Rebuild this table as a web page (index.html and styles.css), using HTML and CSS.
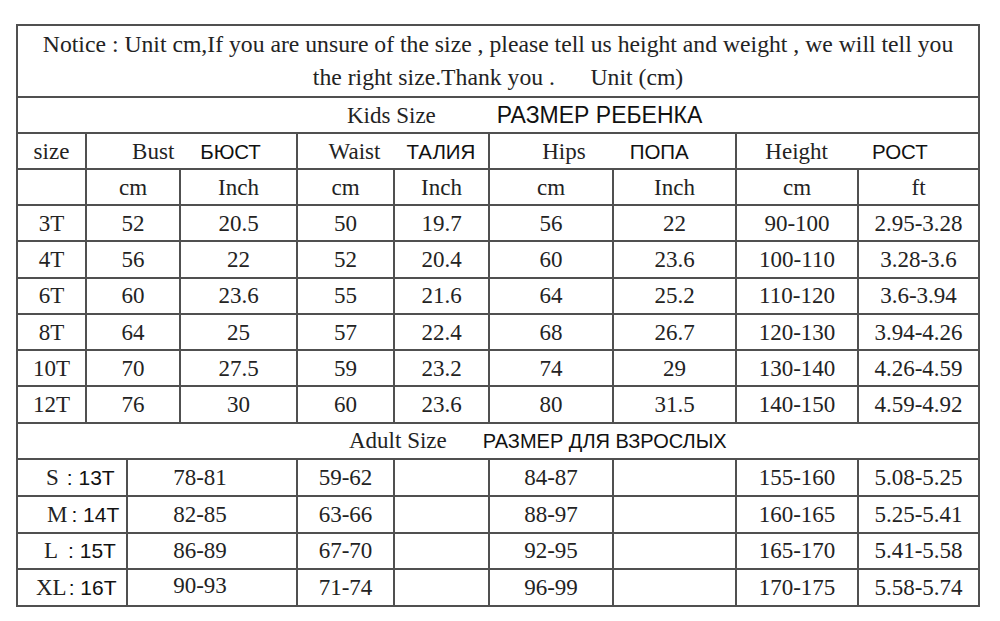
FILE: index.html
```html
<!DOCTYPE html>
<html>
<head>
<meta charset="utf-8">
<link rel="stylesheet" href="styles.css">
</head>
<body>
<table class="chart">
  <colgroup>
    <col class="c1"><col class="c2"><col class="c3"><col class="c4"><col class="c5">
    <col class="c6"><col class="c7"><col class="c8"><col class="c9"><col class="c10">
  </colgroup>
  <tr class="r-notice">
    <td colspan="10" class="notice">Notice : Unit cm,If you are unsure of the size , please tell us height and weight , we will tell you<br>the right size.Thank you .&nbsp;&nbsp;&nbsp;&nbsp;&nbsp; Unit (cm)</td>
  </tr>
  <tr class="r-title">
    <td colspan="10" class="title"><span class="en">Kids Size</span><span class="ru">РАЗМЕР РЕБЕНКА</span></td>
  </tr>
  <tr class="r-head">
    <td>size</td>
    <td colspan="3" class="h-bust"><span class="en">Bust</span><span class="ru hd">БЮСТ</span></td>
    <td colspan="2" class="h-waist"><span class="en">Waist</span><span class="ru hd">ТАЛИЯ</span></td>
    <td colspan="2" class="h-hips"><span class="en">Hips</span><span class="ru hd wide">ПОПА</span></td>
    <td colspan="2" class="h-height"><span class="en">Height</span><span class="ru hd wide">РОСТ</span></td>
  </tr>
  <tr class="r-head">
    <td></td>
    <td colspan="2">cm</td><td>Inch</td>
    <td>cm</td><td>Inch</td>
    <td>cm</td><td>Inch</td>
    <td>cm</td><td>ft</td>
  </tr>
  <tr class="r-row"><td>3T</td><td colspan="2">52</td><td>20.5</td><td>50</td><td>19.7</td><td>56</td><td>22</td><td>90-100</td><td>2.95-3.28</td></tr>
  <tr class="r-row"><td>4T</td><td colspan="2">56</td><td>22</td><td>52</td><td>20.4</td><td>60</td><td>23.6</td><td>100-110</td><td>3.28-3.6</td></tr>
  <tr class="r-row"><td>6T</td><td colspan="2">60</td><td>23.6</td><td>55</td><td>21.6</td><td>64</td><td>25.2</td><td>110-120</td><td>3.6-3.94</td></tr>
  <tr class="r-row"><td>8T</td><td colspan="2">64</td><td>25</td><td>57</td><td>22.4</td><td>68</td><td>26.7</td><td>120-130</td><td>3.94-4.26</td></tr>
  <tr class="r-row"><td>10T</td><td colspan="2">70</td><td>27.5</td><td>59</td><td>23.2</td><td>74</td><td>29</td><td>130-140</td><td>4.26-4.59</td></tr>
  <tr class="r-row"><td>12T</td><td colspan="2">76</td><td>30</td><td>60</td><td>23.6</td><td>80</td><td>31.5</td><td>140-150</td><td>4.59-4.92</td></tr>
  <tr class="r-title">
    <td colspan="10" class="title adult"><span class="en">Adult Size</span><span class="ru">РАЗМЕР ДЛЯ ВЗРОСЛЫХ</span></td>
  </tr>
  <tr class="r-adult"><td colspan="2" class="asz s-s"><span class="en">S</span><span class="ru sz">: 13T</span></td><td colspan="2" class="abust">78-81</td><td>59-62</td><td></td><td>84-87</td><td></td><td>155-160</td><td>5.08-5.25</td></tr>
  <tr class="r-adult"><td colspan="2" class="asz s-m"><span class="en">M</span><span class="ru sz">: 14T</span></td><td colspan="2" class="abust">82-85</td><td>63-66</td><td></td><td>88-97</td><td></td><td>160-165</td><td>5.25-5.41</td></tr>
  <tr class="r-adult r-short"><td colspan="2" class="asz s-l"><span class="en">L</span><span class="ru sz">: 15T</span></td><td colspan="2" class="abust">86-89</td><td>67-70</td><td></td><td>92-95</td><td></td><td>165-170</td><td>5.41-5.58</td></tr>
  <tr class="r-adult r-last"><td colspan="2" class="asz s-xl"><span class="en">XL</span><span class="ru sz">: 16T</span></td><td colspan="2" class="abust up">90-93</td><td>71-74</td><td></td><td>96-99</td><td></td><td>170-175</td><td>5.58-5.74</td></tr>
</table>
</body>
</html>
```

FILE: styles.css
```css
html, body {
  margin: 0;
  padding: 0;
  background: #ffffff;
}

body {
  padding: 24px 0 0 16px;
}

.chart {
  border-collapse: collapse;
  table-layout: fixed;
  width: 962px;
  font-family: "Liberation Serif", "Times New Roman", serif;
  font-size: 23px;
  color: #232323;
}

.c1 { width: 69px; }
.c2 { width: 41px; }
.c3 { width: 53px; }
.c4 { width: 117px; }
.c5 { width: 97px; }
.c6 { width: 95px; }
.c7 { width: 124px; }
.c8 { width: 123px; }
.c9 { width: 122px; }
.c10 { width: 121px; }

.chart td {
  border: 2px solid #505050;
  text-align: center;
  vertical-align: middle;
  padding: 0;
  white-space: nowrap;
  line-height: 1;
}

.r-notice td {
  height: 70px;
  line-height: 33px;
  padding-top: 0;
  font-size: 23.7px;
}

.r-title td { height: 34px; }
.r-head td { height: 34px; }
.r-row td { height: 34.3px; }
.r-adult td { height: 35px; }
.r-adult.r-short td { height: 34px; }
.r-adult.r-last td { height: 31px; }

.title {
  text-align: left !important;
  padding-left: 329px !important;
}

.title.adult {
  padding-left: 331px !important;
}

.title .ru {
  margin-left: 61px;
}

.title.adult .ru {
  margin-left: 36px;
  font-size: 20px;
}

.ru {
  font-family: "Liberation Sans", Arial, sans-serif;
  color: #111111;
  font-size: 23px;
}

.ru.hd {
  font-size: 20.5px;
  margin-left: 26px;
}

.ru.hd.wide {
  margin-left: 44px;
}

.h-bust { padding-left: 10px !important; }
.h-waist { padding-left: 18px !important; }
.h-hips { padding-left: 6px !important; }
.h-height { padding-right: 22px !important; }

.asz {
  text-align: left !important;
}

.ru.sz {
  font-size: 21px;
}

.s-s { padding-left: 28px !important; }
.s-s .sz { margin-left: 8px; }
.s-m { padding-left: 29px !important; }
.s-m .sz { margin-left: 4px; }
.s-l { padding-left: 26px !important; }
.s-l .sz { margin-left: 10px; }
.s-xl { padding-left: 18px !important; }
.s-xl .sz { margin-left: 2px; }

.abust {
  padding-right: 24px !important;
}

.abust.up {
  padding-bottom: 4px !important;
}
```
